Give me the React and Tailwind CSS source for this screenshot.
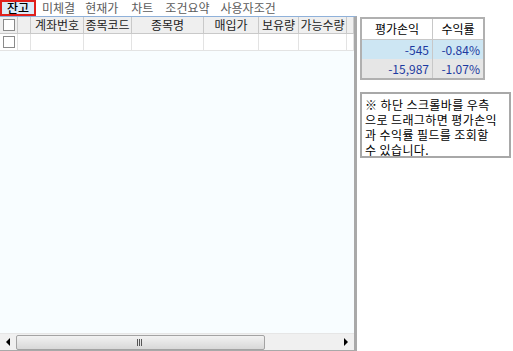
const font = { fontFamily: '"Noto Sans CJK KR", "Noto Sans", sans-serif' }

const tabs = [
  { t: '잔고', ml: '' },
  { t: '미체결', ml: 'ml-[6px]' },
  { t: '현재가', ml: 'ml-[10px]' },
  { t: '차트', ml: 'ml-[13px]' },
  { t: '조건요약', ml: 'ml-[12px]' },
  { t: '사용자조건', ml: 'ml-[11px]' },
]

const cols = [
  { w: 'w-[18px]', label: 'check' },
  { w: 'w-[13px]', label: '' },
  { w: 'w-[53px]', label: '계좌번호' },
  { w: 'w-[48px]', label: '종목코드' },
  { w: 'w-[72px]', label: '종목명' },
  { w: 'w-[55px]', label: '매입가' },
  { w: 'w-[40px]', label: '보유량' },
  { w: 'w-[48px]', label: '가능수량' },
  { w: 'flex-1', label: '' },
]

const note = ['※ 하단 스크롤바를 우측', '으로 드래그하면 평가손익', '과 수익률 필드를 조회할', '수 있습니다.']

const Check = () => <div className="h-[12px] w-[12px] border border-[#8a8a8a] bg-white" />

const App = () => (
  <div className="flex h-[351px] w-[513px] bg-white text-[12px] leading-none text-black" style={font}>
    <div className="flex w-[357px] flex-col">
      <div className="flex h-[16px] items-center">
        {tabs.map((tab, i) =>
          i === 0 ? (
            <div key={tab.t} className="flex h-[16px] w-[36px] items-center justify-center border-2 border-[#e0201c] bg-[#dcebf8] text-[12px] font-medium">
              {tab.t}
            </div>
          ) : (
            <div key={tab.t} className={`${tab.ml} text-[#5c5c5c]`}>{tab.t}</div>
          )
        )}
      </div>
      <div className="flex flex-1 flex-col border-t border-[#8fb1da] border-r-[3px] border-r-[#a9a9a9] border-b border-b-[#a9a9a9] bg-[#f8fdff]">
        <div className="flex h-[17px] border-b border-[#c9c9c9] bg-[#efefef]">
          {cols.map((c, i) => (
            <div key={i} className={`${c.w} flex items-center justify-center border-r border-[#c9c9c9] text-[12px] text-[#222]`}>
              {c.label === 'check' ? <Check /> : c.label}
            </div>
          ))}
        </div>
        <div className="flex h-[17px] border-b border-[#e3e3e3] bg-white">
          {cols.map((c, i) => (
            <div key={i} className={`${c.w} flex items-center justify-center border-r border-[#e3e3e3]`}>
              {c.label === 'check' ? <Check /> : null}
            </div>
          ))}
        </div>
        <div className="flex-1" />
        <div className="flex h-[17px] items-center border-t border-[#e6e6e6] bg-[#f0f0f0]">
          <div className="flex w-[16px] items-center justify-center">
            <div className="h-0 w-0 border-y-[4px] border-r-[4px] border-y-transparent border-r-black" />
          </div>
          <div className="flex h-[15px] w-[249px] items-center rounded-[2px] border border-[#a3a3a3] bg-gradient-to-b from-[#f2f2f2] to-[#d8d8d8] pl-[120px]">
            <div className="flex gap-[1px]">
              <div className="h-[7px] w-[1px] bg-[#555]" />
              <div className="h-[7px] w-[1px] bg-[#555]" />
              <div className="h-[7px] w-[1px] bg-[#555]" />
            </div>
          </div>
          <div className="flex-1" />
          <div className="flex w-[16px] items-center justify-center">
            <div className="h-0 w-0 border-y-[4px] border-l-[4px] border-y-transparent border-l-black" />
          </div>
        </div>
      </div>
    </div>
    <div className="flex flex-col pl-[3px] pt-[17px]">
      <div className="w-[125px] border-2 border-[#b0b0b0] bg-white text-[12px]">
        <div className="flex h-[21px] border-b border-[#c8c8c8]">
          <div className="flex w-[71px] items-center justify-center border-r border-[#c8c8c8]">평가손익</div>
          <div className="flex flex-1 items-center justify-center">수익률</div>
        </div>
        <div className="flex h-[19px] bg-[#cde6f3] text-[#1c3aa0]">
          <div className="flex w-[71px] items-center justify-end border-r border-[#c8c8c8] pr-[3px]">-545</div>
          <div className="flex flex-1 items-center justify-end pr-[3px]">-0.84%</div>
        </div>
        <div className="flex h-[19px] bg-[#e6e6e6] text-[#1c3aa0]">
          <div className="flex w-[71px] items-center justify-end border-r border-[#c8c8c8] pr-[3px]">-15,987</div>
          <div className="flex flex-1 items-center justify-end pr-[3px]">-1.07%</div>
        </div>
      </div>
      <div className="mt-[12px] flex h-[66px] w-[151px] flex-col border-2 border-[#a8a8a8] bg-white px-[3px] pt-[3px] text-[12px]">
        {note.map((l) => (
          <div key={l} className="h-[15px] whitespace-nowrap leading-[15px] tracking-[0.4px]">{l}</div>
        ))}
      </div>
    </div>
  </div>
)

export default App
